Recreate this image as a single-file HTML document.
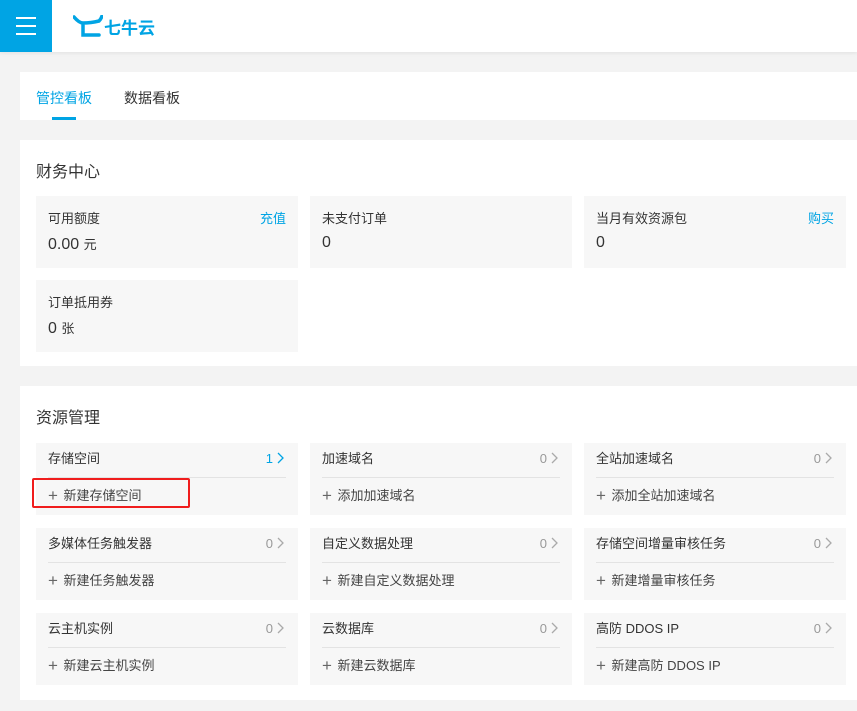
<!DOCTYPE html>
<html><head><meta charset="utf-8"><style>
*{margin:0;padding:0;box-sizing:border-box}
body{width:857px;height:711px;overflow:hidden;background:#f3f3f3;font-family:"Liberation Sans","Noto Sans CJK SC",sans-serif;color:#333;position:relative}
.hdr{position:absolute;left:0;top:0;width:857px;height:52px;background:#fff;box-shadow:0 1px 4px rgba(0,0,0,.08)}
.menu{position:absolute;left:0;top:0;width:52px;height:52px;background:#00a4e4}
.menu i{position:absolute;left:16px;width:20px;height:2px;background:#fff}
.logo{position:absolute;left:104px;top:14px;color:#00a4e4;font-size:17px;font-weight:bold}
.card{position:absolute;left:20px;width:837px;background:#fff}
.tab{position:absolute;top:16px;font-size:14px}
.ttl{position:absolute;left:16px;font-size:16px;color:#333}
.cell{position:absolute;width:262px;height:72px;background:#f7f7f7;font-size:13px}
.cell .l{position:absolute;left:12px;top:12px}
.cell .r{position:absolute;right:12px;top:12px;color:#00a4e4}
.cell .v{position:absolute;left:12px;top:38px;font-size:16px}
.cell .v small{font-size:13px}
.cell .n{position:absolute;right:14px;top:8px;color:#999;font-size:13px}
.cell .n.b{color:#00a4e4}
.cell .n svg{vertical-align:-1px;margin-left:4px}
.cell .hr{position:absolute;left:12px;right:12px;top:34px;height:1px;background:#e3e3e3}
.cell .a{position:absolute;left:12px;top:42px;color:#444}
.cell .a b{font-weight:normal;font-size:17px;color:#666;margin-right:2px;vertical-align:-1px}
.rc .l{top:5px}
</style></head><body>
<div class="hdr"><div class="menu"><i style="top:17px"></i><i style="top:25px"></i><i style="top:33px"></i></div>
<svg style="position:absolute;left:73px;top:15px" width="30" height="22" viewBox="0 0 30 22"><path d="M1 2 Q6 8 10 8 L10 20 L26 20 M10 8 Q18 8 26 6 Q28 4 29 1" fill="none" stroke="#00a4e4" stroke-width="3.5" stroke-linecap="round"/></svg>
<div class="logo">七牛云</div></div>
<div class="card" style="top:72px;height:48px">
<div class="tab" style="left:16px;color:#00a4e4">管控看板</div>
<div style="position:absolute;left:32px;top:45px;width:24px;height:3px;background:#00a4e4"></div>
<div class="tab" style="left:104px">数据看板</div></div>
<div class="card" style="top:140px;height:226px"><div class="ttl" style="top:18px">财务中心</div></div>
<div class="cell" style="left:36px;top:196px"><span class="l">可用额度</span><span class="r">充值</span><span class="v">0.00 <small>元</small></span></div>
<div class="cell" style="left:310px;top:196px"><span class="l">未支付订单</span><span class="v">0</span></div>
<div class="cell" style="left:584px;top:196px"><span class="l">当月有效资源包</span><span class="r">购买</span><span class="v">0</span></div>
<div class="cell" style="left:36px;top:280px"><span class="l">订单抵用券</span><span class="v">0 <small>张</small></span></div>
<div class="card" style="top:386px;height:314px"><div class="ttl" style="top:18px">资源管理</div></div>
<div class="cell rc" style="left:36px;top:443px"><span class="l">存储空间</span><span class="n b">1<svg width="7" height="12" viewBox="0 0 7 12"><path d="M1 1 L6 6 L1 11" fill="none" stroke="#00a4e4" stroke-width="1.3"/></svg></span><div class="hr"></div><span class="a"><b>+</b> 新建存储空间</span></div>
<div class="cell rc" style="left:310px;top:443px"><span class="l">加速域名</span><span class="n">0<svg width="7" height="12" viewBox="0 0 7 12"><path d="M1 1 L6 6 L1 11" fill="none" stroke="#aaa" stroke-width="1.3"/></svg></span><div class="hr"></div><span class="a"><b>+</b> 添加加速域名</span></div>
<div class="cell rc" style="left:584px;top:443px"><span class="l">全站加速域名</span><span class="n">0<svg width="7" height="12" viewBox="0 0 7 12"><path d="M1 1 L6 6 L1 11" fill="none" stroke="#aaa" stroke-width="1.3"/></svg></span><div class="hr"></div><span class="a"><b>+</b> 添加全站加速域名</span></div>
<div class="cell rc" style="left:36px;top:528px"><span class="l">多媒体任务触发器</span><span class="n">0<svg width="7" height="12" viewBox="0 0 7 12"><path d="M1 1 L6 6 L1 11" fill="none" stroke="#aaa" stroke-width="1.3"/></svg></span><div class="hr"></div><span class="a"><b>+</b> 新建任务触发器</span></div>
<div class="cell rc" style="left:310px;top:528px"><span class="l">自定义数据处理</span><span class="n">0<svg width="7" height="12" viewBox="0 0 7 12"><path d="M1 1 L6 6 L1 11" fill="none" stroke="#aaa" stroke-width="1.3"/></svg></span><div class="hr"></div><span class="a"><b>+</b> 新建自定义数据处理</span></div>
<div class="cell rc" style="left:584px;top:528px"><span class="l">存储空间增量审核任务</span><span class="n">0<svg width="7" height="12" viewBox="0 0 7 12"><path d="M1 1 L6 6 L1 11" fill="none" stroke="#aaa" stroke-width="1.3"/></svg></span><div class="hr"></div><span class="a"><b>+</b> 新建增量审核任务</span></div>
<div class="cell rc" style="left:36px;top:613px"><span class="l">云主机实例</span><span class="n">0<svg width="7" height="12" viewBox="0 0 7 12"><path d="M1 1 L6 6 L1 11" fill="none" stroke="#aaa" stroke-width="1.3"/></svg></span><div class="hr"></div><span class="a"><b>+</b> 新建云主机实例</span></div>
<div class="cell rc" style="left:310px;top:613px"><span class="l">云数据库</span><span class="n">0<svg width="7" height="12" viewBox="0 0 7 12"><path d="M1 1 L6 6 L1 11" fill="none" stroke="#aaa" stroke-width="1.3"/></svg></span><div class="hr"></div><span class="a"><b>+</b> 新建云数据库</span></div>
<div class="cell rc" style="left:584px;top:613px"><span class="l">高防 DDOS IP</span><span class="n">0<svg width="7" height="12" viewBox="0 0 7 12"><path d="M1 1 L6 6 L1 11" fill="none" stroke="#aaa" stroke-width="1.3"/></svg></span><div class="hr"></div><span class="a"><b>+</b> 新建高防 DDOS IP</span></div>
<div style="position:absolute;left:32px;top:478px;width:158px;height:30px;border:2px solid #f01d1d;border-radius:2px"></div>
</body></html>
